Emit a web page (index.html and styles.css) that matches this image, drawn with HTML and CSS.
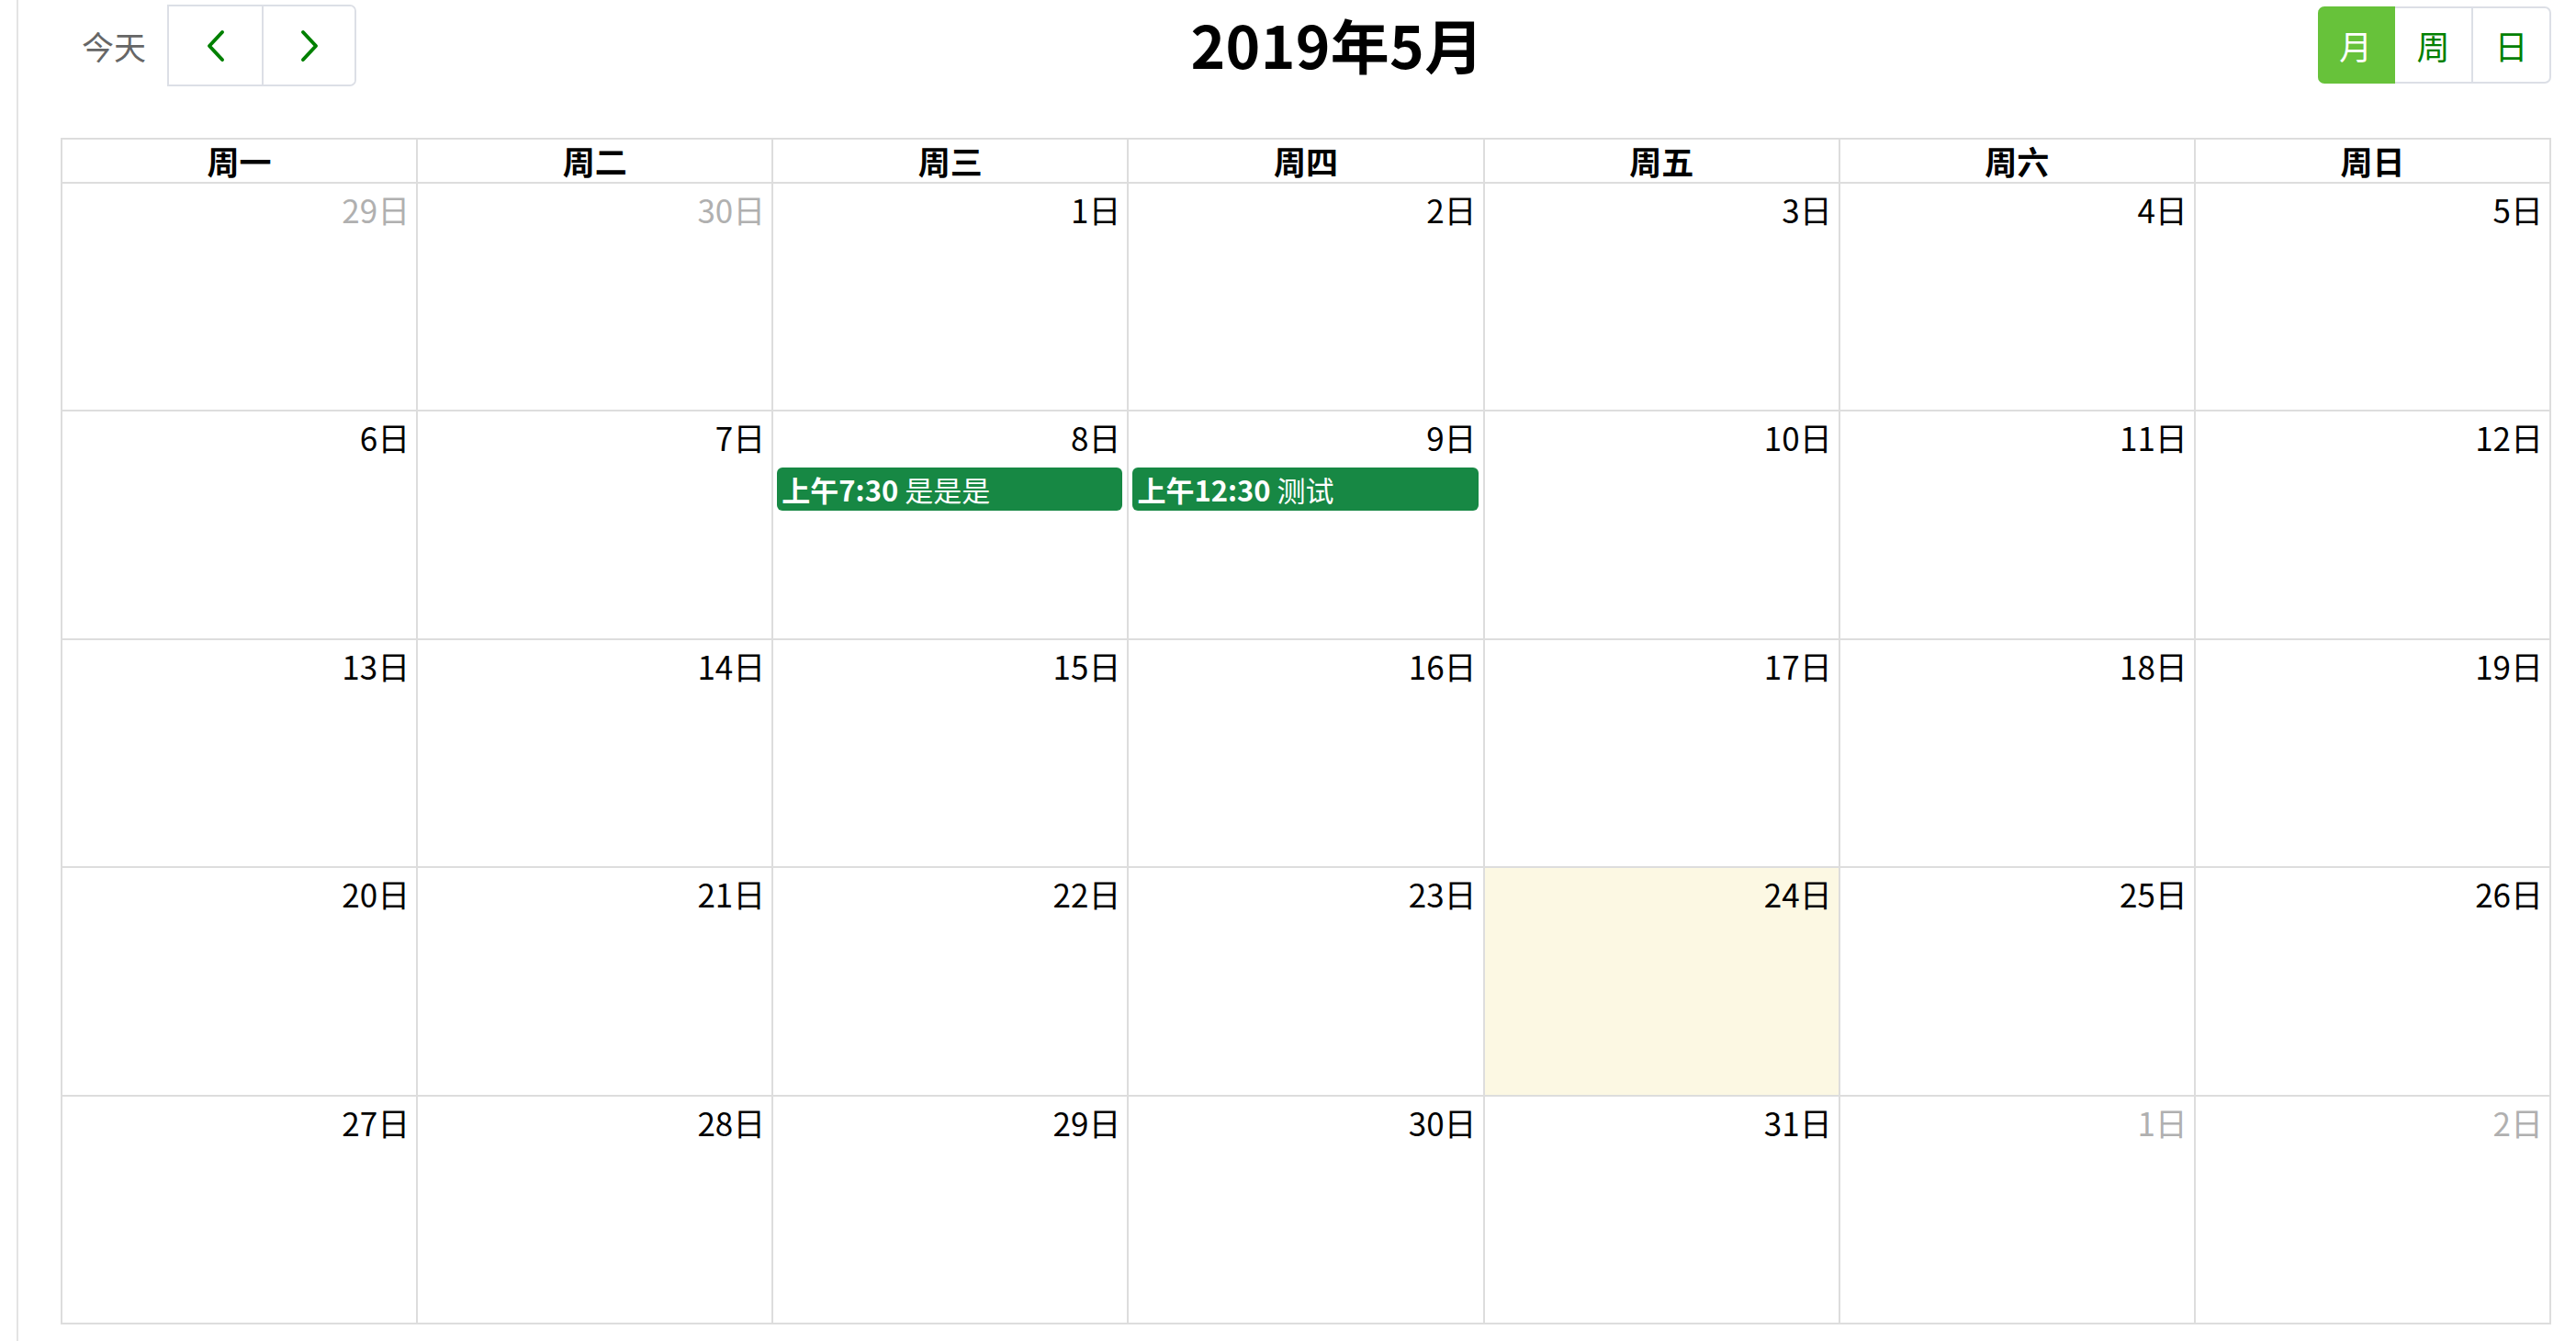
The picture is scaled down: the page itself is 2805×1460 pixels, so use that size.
FILE: index.html
```html
<!DOCTYPE html>
<html lang="zh-CN">
<head>
<meta charset="utf-8">
<title>日历</title>
<link rel="stylesheet" href="styles.css">
</head>
<body>
<div class="page">
  <div class="toolbar">
    <div class="tb-left">
      <button class="btn-today">今天</button>
      <div class="nav-group">
        <button class="nav-btn" aria-label="上一月">
          <svg width="24" height="36" viewBox="0 0 24 36"><polyline points="19,3 5,18 19,33" fill="none" stroke="#008000" stroke-width="4" stroke-linecap="round" stroke-linejoin="round"/></svg>
        </button>
        <button class="nav-btn" aria-label="下一月">
          <svg width="24" height="36" viewBox="0 0 24 36"><polyline points="5,3 19,18 5,33" fill="none" stroke="#008000" stroke-width="4" stroke-linecap="round" stroke-linejoin="round"/></svg>
        </button>
      </div>
    </div>
    <div class="tb-center"><h2 class="title">2019年5月</h2></div>
    <div class="tb-right">
      <div class="view-group">
        <button class="view-btn active">月</button>
        <button class="view-btn">周</button>
        <button class="view-btn">日</button>
      </div>
    </div>
  </div>

  <div class="cal">
    <div class="head">周一</div>
    <div class="head">周二</div>
    <div class="head">周三</div>
    <div class="head">周四</div>
    <div class="head">周五</div>
    <div class="head">周六</div>
    <div class="head">周日</div>

    <div class="day other"><div class="num">29日</div></div>
    <div class="day other"><div class="num">30日</div></div>
    <div class="day"><div class="num">1日</div></div>
    <div class="day"><div class="num">2日</div></div>
    <div class="day"><div class="num">3日</div></div>
    <div class="day"><div class="num">4日</div></div>
    <div class="day"><div class="num">5日</div></div>

    <div class="day"><div class="num">6日</div></div>
    <div class="day"><div class="num">7日</div></div>
    <div class="day"><div class="num">8日</div><div class="event"><b>上午7:30</b> 是是是</div></div>
    <div class="day"><div class="num">9日</div><div class="event"><b>上午12:30</b> 测试</div></div>
    <div class="day"><div class="num">10日</div></div>
    <div class="day"><div class="num">11日</div></div>
    <div class="day"><div class="num">12日</div></div>

    <div class="day"><div class="num">13日</div></div>
    <div class="day"><div class="num">14日</div></div>
    <div class="day"><div class="num">15日</div></div>
    <div class="day"><div class="num">16日</div></div>
    <div class="day"><div class="num">17日</div></div>
    <div class="day"><div class="num">18日</div></div>
    <div class="day"><div class="num">19日</div></div>

    <div class="day"><div class="num">20日</div></div>
    <div class="day"><div class="num">21日</div></div>
    <div class="day"><div class="num">22日</div></div>
    <div class="day"><div class="num">23日</div></div>
    <div class="day today"><div class="num">24日</div></div>
    <div class="day"><div class="num">25日</div></div>
    <div class="day"><div class="num">26日</div></div>

    <div class="day"><div class="num">27日</div></div>
    <div class="day"><div class="num">28日</div></div>
    <div class="day"><div class="num">29日</div></div>
    <div class="day"><div class="num">30日</div></div>
    <div class="day"><div class="num">31日</div></div>
    <div class="day other"><div class="num">1日</div></div>
    <div class="day other"><div class="num">2日</div></div>
  </div>
</div>
</body>
</html>
```

FILE: styles.css
```css
html, body {
  margin: 0;
  padding: 0;
  background: #fff;
}
body {
  font-family: "Noto Sans CJK SC", "Microsoft YaHei", "Noto Sans", sans-serif;
  color: #000;
}
.page {
  margin-left: 18px;
  border-left: 2px solid #e4e4e4;
  min-height: 1460px;
  box-sizing: border-box;
  padding: 0 27px 0 46px;
}
button {
  font-family: inherit;
  margin: 0;
  cursor: pointer;
}

/* toolbar */
.toolbar {
  display: flex;
  align-items: flex-start;
  height: 150px;
}
.tb-left {
  display: flex;
  margin-top: 5px;
}
.btn-today {
  width: 116px;
  height: 89px;
  border: none;
  background: transparent;
  font-size: 35px;
  color: #666;
  padding: 0;
}
.nav-group {
  display: flex;
  border: 2px solid #dcdfe6;
  border-radius: 0 7px 7px 0;
  height: 89px;
  box-sizing: border-box;
  overflow: hidden;
}
.nav-btn {
  width: 101px;
  height: 100%;
  border: none;
  background: #fff;
  padding: 0;
  display: flex;
  align-items: center;
  justify-content: center;
}
.nav-btn + .nav-btn {
  border-left: 2px solid #dcdfe6;
}
.tb-center {
  flex: 1;
  text-align: center;
}
.title {
  margin: 0;
  font-size: 64px;
  line-height: 94px;
  font-weight: 700;
  letter-spacing: 0.3px;
}
.tb-right {
  margin-top: 7px;
}
.view-group {
  display: flex;
}
.view-btn {
  width: 85px;
  height: 84px;
  box-sizing: border-box;
  border: 2px solid #dcdfe6;
  border-left: none;
  background: #fff;
  color: #008000;
  font-size: 36px;
  padding: 0;
}
.view-btn:last-child {
  border-radius: 0 7px 7px 0;
}
.view-btn.active {
  width: 84px;
  background: #67c23a;
  border-color: #67c23a;
  color: #fff;
  border-radius: 7px 0 0 7px;
}

/* calendar grid */
.cal {
  display: grid;
  grid-template-columns: repeat(7, 1fr);
  grid-template-rows: 46px repeat(5, 1fr);
  gap: 2px;
  padding: 2px;
  background: #dddddd;
  height: 1292px;
  box-sizing: border-box;
}
.head {
  background: #fff;
  font-size: 35px;
  font-weight: 700;
  line-height: 46px;
  text-align: center;
}
.day {
  background: #fff;
  min-width: 0;
  overflow: hidden;
}
.day.today {
  background: #fcf8e3;
}
.num {
  font-size: 35px;
  line-height: 42px;
  text-align: right;
  padding: 7px 7px 0 0;
}
.day.other .num {
  color: #b0b0b0;
}
.event {
  margin: 12px 5px 0 4px;
  height: 47px;
  line-height: 47px;
  background: #178844;
  border-radius: 6px;
  color: #fff;
  font-size: 31px;
  padding: 0 5px;
  white-space: nowrap;
  overflow: hidden;
}
.event b {
  font-weight: 700;
}
```
